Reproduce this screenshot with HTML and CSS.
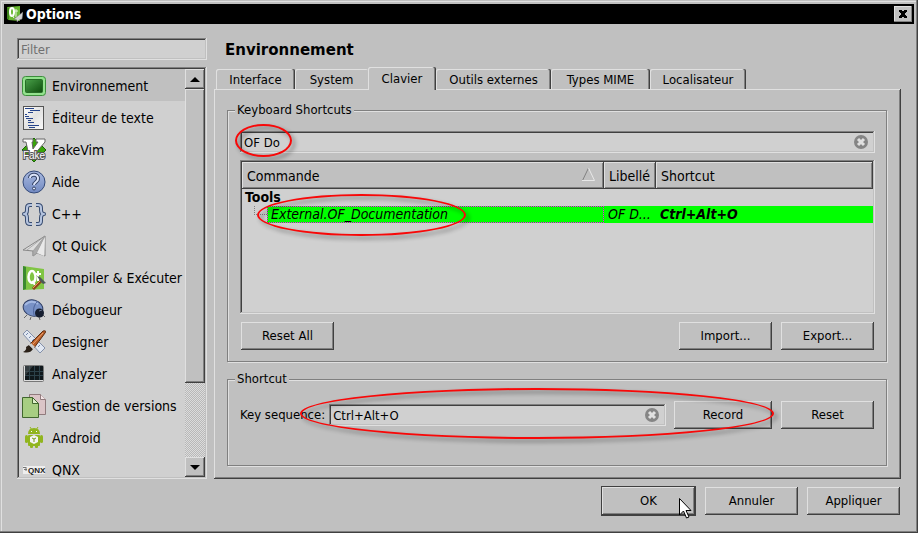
FILE: index.html
```html
<!DOCTYPE html>
<html lang="fr">
<head>
<meta charset="utf-8">
<title>Options</title>
<meta name="viewport" content="width=device-width, initial-scale=1">
<link rel="stylesheet" href="styles.css">
</head>
<body>
<div class="dialog">
  <header class="titlebar">
    <svg class="app-icon" viewBox="0 0 16 16" aria-hidden="true">
      <path d="M0 1 13 0v15L1 14z" fill="#69b832"/><path d="M0 1l2 1v12l-2-1z" fill="#3e861b"/>
      <ellipse cx="5" cy="6" rx="2" ry="4" fill="none" stroke="#fff" stroke-width="2"/>
      <path d="m5 9 2 3M9 3v8M8 5h3" fill="none" stroke="#e8f5df" stroke-width="1"/>
      <path d="M16 6 7 13l3 1v2l2-2 3-1z" fill="#d2d2d2" stroke="#777" stroke-width=".5"/>
    </svg>
    <h1>Options</h1>
    <button class="close" type="button" aria-label="Fermer"><svg viewBox="0 0 8 8" aria-hidden="true"><path d="M0 0h3v1h2V0h3v2H7v1H6v2h1v1h1v2H5V7H3v1H0V6h1V5h1V3H1V2H0z"/></svg></button>
  </header>

  <div class="content">
    <aside class="sidebar">
      <input class="field" type="text" placeholder="Filter" aria-label="Filter">
      <div class="list-box">
        <ul class="categories">
          <li><button type="button" class="category selected">
            <svg viewBox="0 0 24 24" aria-hidden="true"><defs><linearGradient id="screen" x2="1" y2="1"><stop stop-color="#4aa04a"/><stop offset="1" stop-color="#0c4d0c"/></linearGradient></defs><rect x=".5" y="2.5" width="23" height="19" rx="3" fill="#93e28e" stroke="#3c8e3c"/><rect x="3.5" y="5.5" width="17" height="13" rx="1" fill="url(#screen)" stroke="#276c27"/></svg>Environnement</button></li>
          <li><button type="button" class="category">
            <svg viewBox="0 0 24 24" aria-hidden="true"><defs><linearGradient id="sheet" x2="1" y2="1"><stop stop-color="#fff"/><stop offset=".5" stop-color="#e2e2e2"/><stop offset="1" stop-color="#fafafa"/></linearGradient></defs><rect x="1.5" y=".5" width="20" height="23" fill="url(#sheet)" stroke="#555"/><path d="M3 2.5h9M3 8.5h2M4 12.5h7M3 10.5h4M6 16.5h6M6 19.5h11M7 21.5h6M8 4.5h10M6 6.5h5M6 14.5h3" stroke="#27458b"/></svg>Éditeur de texte</button></li>
          <li><button type="button" class="category">
            <svg viewBox="0 0 24 24" aria-hidden="true"><path d="m12 0 12 12-12 12L0 12z" fill="#39a509" stroke="#1b6108"/><path d="M1 1h10v3h-1l1 7 5-7h-2V1h9v3L11 18H7L4 4H1z" fill="#fff" stroke="#666"/><text x="12" y="21" text-anchor="middle" font-family="Liberation Sans" font-size="10" fill="#fff" stroke="#555" stroke-width="2" paint-order="stroke">Fake</text></svg>FakeVim</button></li>
          <li><button type="button" class="category">
            <svg viewBox="0 0 24 24" aria-hidden="true"><defs><linearGradient id="help" x2="0" y2="1"><stop stop-color="#a9b9df"/><stop offset="1" stop-color="#7189c1"/></linearGradient></defs><circle cx="12" cy="12" r="11" fill="url(#help)" stroke="#344a79"/><path d="M8 8c0-5 9-4 8 1 0 3-4 3-4 6" fill="none" stroke="#334263" stroke-width="4"/><path d="M8 8c0-5 9-4 8 1 0 3-4 3-4 6" fill="none" stroke="#dce5fa" stroke-width="2"/><circle cx="12" cy="18.5" r="1.5" fill="#dce5fa" stroke="#334263"/></svg>Aide</button></li>
          <li><button type="button" class="category">
            <svg viewBox="0 0 24 24" aria-hidden="true"><g fill="none" stroke-linejoin="round"><path d="M10 3H8Q5 3 5 6v2q0 4-3 4 3 0 3 4v3q0 3 3 3h2M14 3h2q3 0 3 3v2q0 4 3 4-3 0-3 4v3q0 3-3 3h-2" stroke="#384c70" stroke-width="4"/><path d="M10 3H8Q5 3 5 6v2q0 4-3 4 3 0 3 4v3q0 3 3 3h2M14 3h2q3 0 3 3v2q0 4 3 4-3 0-3 4v3q0 3-3 3h-2" stroke="#b5c4df" stroke-width="2"/></g></svg>C++</button></li>
          <li><button type="button" class="category">
            <svg viewBox="0 0 24 24" aria-hidden="true"><path d="M23 2v20l-8-3-4 3v-5L1 16z" fill="#ddd" stroke="#868686" stroke-linejoin="round"/><path d="M23 2 11 17v5l4-3zM23 2 5 16" fill="#aaa" stroke="#969696" stroke-width=".7"/><path d="M23 3 15 19l7 3z" fill="#e9e9e9"/></svg>Qt Quick</button></li>
          <li><button type="button" class="category">
            <svg viewBox="0 0 24 24" aria-hidden="true"><path d="M1 0 22 3v20L1 24z" fill="#80c544"/><path d="m1 0 3 1v22l-3 1z" fill="#3c8a30"/><ellipse cx="10" cy="11" rx="3.5" ry="6" fill="none" stroke="#fff" stroke-width="2.5"/><path d="m10 15 3 4M16 5v10M14 8h5" stroke="#fff" stroke-width="2"/><path d="m11 23 9-9" stroke="#8e451d" stroke-width="3"/><path d="m11 22 9-9" stroke="#ed9a58"/><path d="m15 10 3 1 6 6-3 1-2-2z" fill="#4c5858"/></svg>Compiler &amp; Exécuter</button></li>
          <li><button type="button" class="category">
            <svg viewBox="0 0 24 24" aria-hidden="true"><path d="m5 17-3 3m7-1-1 3m9-3 1 3m3-5 2 2" stroke="#666"/><ellipse cx="11" cy="10" rx="10" ry="8" transform="rotate(18 11 10)" fill="#7891c6" stroke="#2c3b61"/><path d="M3 7q6-6 13-1" fill="none" stroke="#a4b8e2" stroke-width="2"/><path d="M16 3q-6 5-4 14" fill="none" stroke="#4d639a"/><circle cx="17.500" cy="15" r="4.500" fill="#161e30"/><path d="m17 13 3-1" stroke="#68758f"/></svg>Débogueur</button></li>
          <li><button type="button" class="category">
            <svg viewBox="0 0 24 24" aria-hidden="true"><path d="m1 4 4-4 18 18-5 5z" fill="#e1e7f1" stroke="#8390aa"/><path d="m4 5 2-2m1 5 2-2m1 5 2-2m1 5 2-2m1 5 2-2" stroke="#7185ac"/><path d="m8 14 13-13q4-1 2 2L12 18z" fill="#b85e28" stroke="#5c2c12"/><path d="m11 14 10-11" stroke="#eda373"/><path d="m7 15 4 4q-3 5-10 3 4-2 3-5z" fill="#2a2018"/><path d="m7 15 2-2 4 4-2 2z" fill="#ccc"/></svg>Designer</button></li>
          <li><button type="button" class="category">
            <svg viewBox="0 0 24 24" aria-hidden="true"><rect x="1.5" y="3.5" width="20" height="16" rx="1" fill="#ddd" stroke="#777"/><rect x="3" y="4" width="18" height="14" fill="#10181c"/><path d="M3 9.5h18M3 13.5h18M7.5 4v14M12.5 4v14M17.500 4v14" stroke="#2c414a"/><path d="M3 4h8L3 14z" fill="#4c5559" opacity=".6"/></svg>Analyzer</button></li>
          <li><button type="button" class="category">
            <svg viewBox="0 0 24 24" aria-hidden="true"><path d="M7.5.5h11l5 5v15h-16z" fill="#dbc5c7" stroke="#907b7d"/><path d="M18.5.5v5h5" fill="#f5e7e8" stroke="#907b7d"/><path d="M.5 3.5h10l6 6v14H.5z" fill="#a7ce82" stroke="#41672e"/><path d="M10.5 3.5v6h6z" fill="#dff0cb" stroke="#41672e"/></svg>Gestion de versions</button></li>
          <li><button type="button" class="category">
            <svg viewBox="0 0 24 24" aria-hidden="true"><g fill="#91b51e"><path d="M6 8q0-6 6-6t6 6z"/><rect x="6" y="9" width="12" height="11" rx="1"/><rect x="3" y="9" width="3" height="8" rx="1.5"/><rect x="18" y="9" width="3" height="8" rx="1.5"/><rect x="8" y="18" width="3" height="4" rx="1"/><rect x="13" y="18" width="3" height="4" rx="1"/></g><path d="m8 1 2 3m6-3-2 3" stroke="#91b51e"/><path d="M9 5h1v1H9zM14 5h1v1h-1z" fill="#fff"/><path d="m12 9 4 2v5l-4 2-4-2v-5z" fill="#f4f4f4"/><path d="m10 12 2 1 2-1M12 13v3" fill="none" stroke="#779918"/></svg>Android</button></li>
          <li><button type="button" class="category">
            <svg viewBox="0 0 24 24" aria-hidden="true"><path d="M1 8h22v8H1z" fill="#eee"/><path d="M1 9.5h3M2 11.5h3M4 9v4" stroke="#777"/><text x="6" y="15" font-family="Liberation Sans" font-size="8" font-weight="bold" fill="#222">QNX</text></svg>QNX</button></li>
        </ul>
        <div class="scrollbar" aria-hidden="true">
          <span class="arrow raised"><i class="up"></i></span>
          <span class="thumb raised"></span>
          <span class="arrow raised"><i class="down"></i></span>
        </div>
      </div>
    </aside>

    <main class="settings">
      <h2>Environnement</h2>
      <div class="tabs" role="tablist">
        <button type="button" role="tab" class="tab tab-interface">Interface</button>
        <button type="button" role="tab" class="tab tab-system">System</button>
        <button type="button" role="tab" class="tab tab-clavier active" aria-selected="true">Clavier</button>
        <button type="button" role="tab" class="tab tab-outils">Outils externes</button>
        <button type="button" role="tab" class="tab tab-types">Types MIME</button>
        <button type="button" role="tab" class="tab tab-local">Localisateur</button>
      </div>
      <section class="pane raised" role="tabpanel">
        <fieldset class="shortcuts">
          <legend>Keyboard Shortcuts</legend>
          <div class="input-wrap">
            <input class="field" type="text" value="OF Do" aria-label="Filtrer les raccourcis">
            <button class="clear" type="button" aria-label="Effacer"><svg viewBox="0 0 14 14" aria-hidden="true"><circle cx="7" cy="7" r="7" fill="#858585"/><path d="m4 4 6 6m0-6-6 6" stroke="#e0e0e0" stroke-width="3"/></svg></button>
            <span class="ring ring-filter"></span>
          </div>
          <div class="table-box">
            <table>
              <colgroup><col><col class="col-label"><col class="col-key"></colgroup>
              <thead><tr><th class="sorted"><span>Commande</span><svg viewBox="0 0 13 13" aria-hidden="true"><path d="M6.5 0 .5 12.5" stroke="#808080" fill="none"/><path d="m6.5 0 6 12.5H0" stroke="#e8e8e8" fill="none"/></svg></th><th>Libellé</th><th>Shortcut</th></tr></thead>
              <tbody>
                <tr class="group"><td colspan="3">Tools</td></tr>
                <tr class="command"><td class="tree"><span class="node"><i class="branch"></i><span class="name">External.OF_Documentation</span></span></td><td>OF D...</td><td class="key">Ctrl+Alt+O</td></tr>
              </tbody>
            </table>
            <span class="ring ring-command"></span>
          </div>
          <div class="actions">
            <button type="button" class="button raised">Reset All</button>
            <span class="spacer"></span>
            <button type="button" class="button raised">Import...</button>
            <button type="button" class="button raised">Export...</button>
          </div>
        </fieldset>
        <fieldset class="sequence">
          <legend>Shortcut</legend>
          <div class="sequence-row">
            <label for="keys">Key sequence:</label>
            <div class="recorder">
              <div class="input-wrap">
                <input class="field" id="keys" type="text" value="Ctrl+Alt+O">
                <button class="clear" type="button" aria-label="Effacer"><svg viewBox="0 0 14 14" aria-hidden="true"><circle cx="7" cy="7" r="7" fill="#858585"/><path d="m4 4 6 6m0-6-6 6" stroke="#e0e0e0" stroke-width="3"/></svg></button>
              </div>
              <button type="button" class="button record raised">Record</button>
              <span class="ring ring-sequence"></span>
            </div>
            <button type="button" class="button raised">Reset</button>
          </div>
        </fieldset>
      </section>
    </main>
  </div>

  <footer class="footer">
    <div class="default-action">
      <button type="button" class="button default raised">OK</button>
      <svg class="pointer" viewBox="0 0 13 21" aria-hidden="true"><path d="M.5.5v16.500l4-4 3 7 2.500-1-3-6.500h5z" fill="#fff" stroke="#000"/></svg>
    </div>
    <button type="button" class="button raised">Annuler</button>
    <button type="button" class="button raised">Appliquer</button>
  </footer>
</div>
</body>
</html>
```
FILE: styles.css
```css
:root {
  --face: #c0c0c0;
  --base: #d0d0d0;
  --light: #e0e0e0;
  --shade: #808080;
  --dark: #404040;
  --ui: "DejaVu Sans Condensed", "Noto Sans", sans-serif;
}

* { box-sizing: border-box; }

body {
  margin: 0;
  background: var(--face);
  color: #000;
  font: 13px/16px var(--ui);
}

button, input {
  font: inherit;
  color: inherit;
  border: 0;
  border-radius: 0;
  margin: 0;
  padding: 0;
}

.raised {
  background: var(--face);
  box-shadow: inset -1px -1px var(--dark), inset 1px 1px var(--light), inset -2px -2px var(--shade);
}

.dialog {
  min-height: 100vh;
  display: flex;
  flex-direction: column;
  padding: 4px;
  box-shadow: inset -1px -1px var(--dark), inset -2px -2px var(--shade), inset 1px 1px var(--face), inset 2px 2px var(--light);
}

.titlebar {
  display: flex;
  align-items: center;
  height: 20px;
  padding: 0 2px 0 3px;
  background: #000;
  color: #fff;
}

.app-icon { width: 16px; height: 16px; margin-right: 3px; }

h1 {
  flex: 1;
  margin: 0;
  font: bold 14px/20px var(--ui);
}

.close {
  display: grid;
  place-items: center;
  width: 18px;
  height: 16px;
  background: var(--face);
  box-shadow: inset -1px -1px var(--shade), inset 1px 1px var(--light);
}

.close svg { width: 8px; height: 8px; }

.content {
  flex: 1;
  display: grid;
  grid-template-columns: 190px minmax(0, 1fr);
  gap: 7px;
  padding: 14px 13px 0;
}

.sidebar {
  display: flex;
  flex-direction: column;
  gap: 7px;
}

.field {
  display: block;
  width: 100%;
  height: 22px;
  padding: 1px 4px 0;
  background: var(--base);
  box-shadow: inset -1px -1px var(--light), inset 1px 1px var(--shade), inset -2px -2px var(--face), inset 2px 2px var(--dark);
  outline: 0;
}

.field::placeholder { color: #707070; opacity: 1; }

.list-box {
  flex: 1 1 0;
  min-height: 0;
  height: 0;
  display: flex;
  padding: 2px;
  background: var(--base);
  box-shadow: inset -1px -1px var(--light), inset 1px 1px var(--shade), inset -2px -2px var(--face), inset 2px 2px var(--dark);
}

.categories {
  flex: 1;
  overflow: hidden;
  margin: 0;
  padding: 0;
  list-style: none;
}

.category {
  display: flex;
  align-items: center;
  gap: 6px;
  width: 100%;
  height: 32px;
  padding: 1px 3px 0;
  background: transparent;
  font-size: 14px;
  white-space: nowrap;
}

.category svg { flex: none; width: 24px; height: 24px; }
.category.selected { background: var(--face); }

.scrollbar {
  display: flex;
  flex-direction: column;
  width: 20px;
  background: repeating-conic-gradient(#b8b8b8 0 25%, #dcdcdc 0 50%) 0 0 / 2px 2px;
}

.arrow {
  display: grid;
  place-items: center;
  height: 20px;
}

.arrow i { border: 5px solid transparent; border-width: 0 5px; }
.arrow .up { border-bottom: 5px solid #000; }
.arrow .down { border-top: 5px solid #000; }
.thumb { height: 72%; margin-bottom: auto; }

.settings {
  min-width: 0;
  display: flex;
  flex-direction: column;
}

h2 {
  margin: 0 0 5px 11px;
  font: bold 15px/24px "DejaVu Sans", sans-serif;
}

.tabs {
  position: relative;
  z-index: 1;
  display: flex;
  align-items: flex-end;
  height: 23px;
  margin-bottom: -1px;
  padding: 0 0 1px 2px;
}

.tab {
  height: 20px;
  padding-top: 1px;
  background: var(--face);
  border-radius: 2px 2px 0 0;
  box-shadow: inset -1px 0 var(--dark), inset -2px 0 var(--shade), inset 1px 1px var(--light);
}

.tab-interface { width: 79px; }
.tab-system { width: 73px; box-shadow: inset 1px 1px var(--light); }
.tab-clavier { width: 68px; }
.tab-outils { width: 115px; }
.tab-types { width: 99px; }
.tab-local { width: 96px; }

.tab.active {
  height: 23px;
  margin-bottom: -1px;
}

.pane {
  flex: 1;
  display: flex;
  flex-direction: column;
  gap: 9px;
  padding: 13px 14px 13px 13px;
}

fieldset {
  min-width: 0;
  margin: 0;
  border: 1px solid var(--shade);
  box-shadow: inset 1px 1px var(--light), 1px 1px var(--light);
}

.shortcuts { padding: 13px 11px 11px 12px; }
.sequence { flex: 1; padding: 14px 11px 29px 12px; }

legend {
  margin-left: -5px;
  padding: 0 2px;
  background: var(--face);
}

.input-wrap { position: relative; }

.clear {
  position: absolute;
  top: 4px;
  right: 7px;
  width: 14px;
  height: 14px;
  background: none;
}

.clear svg { display: block; }

.table-box {
  position: relative;
  min-height: 154px;
  margin: 7px 0 8px;
  padding: 2px;
  background: var(--base);
  box-shadow: inset -1px -1px var(--light), inset 1px 1px var(--shade), inset -2px -2px var(--face), inset 2px 2px var(--dark);
}

table {
  width: 100%;
  table-layout: fixed;
  border-collapse: collapse;
  font-size: 14px;
  line-height: 17px;
}

.col-label { width: 52px; }
.col-key { width: 217px; }

th {
  height: 27px;
  padding: 1px 5px 0;
  background: var(--face);
  box-shadow: inset -1px -1px var(--dark), inset 1px 1px var(--light), inset -2px -2px var(--shade);
  font-weight: normal;
  text-align: left;
  white-space: nowrap;
}

.sorted svg { float: right; width: 13px; height: 13px; margin: 0 4px 0 0; }

td {
  height: 17px;
  padding: 0 0 0 4px;
  white-space: nowrap;
  overflow: hidden;
}

.group td { padding-left: 3px; font-weight: bold; }
.command td { background: #0f0; font-style: italic; }
.command .key { font-weight: bold; }
.command .tree { padding: 0; background: none; }

.node { display: flex; }

.branch {
  width: 13px;
  height: 9px;
  margin-left: 12px;
  border: 1px dotted var(--shade);
  border-width: 0 0 1px 1px;
}

.name {
  flex: 1;
  padding-left: 3px;
  background: #0f0;
  border: 1px dotted #f0f;
  line-height: 15px;
}

.actions {
  display: flex;
  gap: 9px;
  padding: 0 1px;
}

.spacer { flex: 1; }

.button {
  flex: none;
  width: 93px;
  height: 28px;
}

.sequence-row {
  display: flex;
  align-items: center;
  gap: 9px;
  padding-right: 1px;
}

.sequence-row label { margin-right: -5px; }

.recorder {
  position: relative;
  flex: 1;
  display: flex;
  align-items: center;
  gap: 8px;
}

.recorder .input-wrap { flex: 1; }
.record { width: 98px; }

.ring {
  position: absolute;
  border: 2px solid #f80808;
  border-radius: 50%;
  filter: drop-shadow(3px 3px 2px rgb(0 0 0 / 45%));
  pointer-events: none;
}

.ring-filter { top: -7px; left: -5px; width: 57px; height: 33px; }
.ring-command { top: 34px; left: 17px; width: 209px; height: 42px; }
.ring-sequence { top: -13px; left: -29px; right: -2px; height: 51px; }

.footer {
  display: flex;
  align-items: center;
  justify-content: flex-end;
  gap: 9px;
  padding: 7px 14px 13px 13px;
}

.default-action { position: relative; }

.button.default {
  display: block;
  width: 95px;
  height: 30px;
  border: 1px solid var(--dark);
}

.pointer {
  position: absolute;
  top: 12px;
  left: 78px;
  width: 13px;
  height: 21px;
}
```
